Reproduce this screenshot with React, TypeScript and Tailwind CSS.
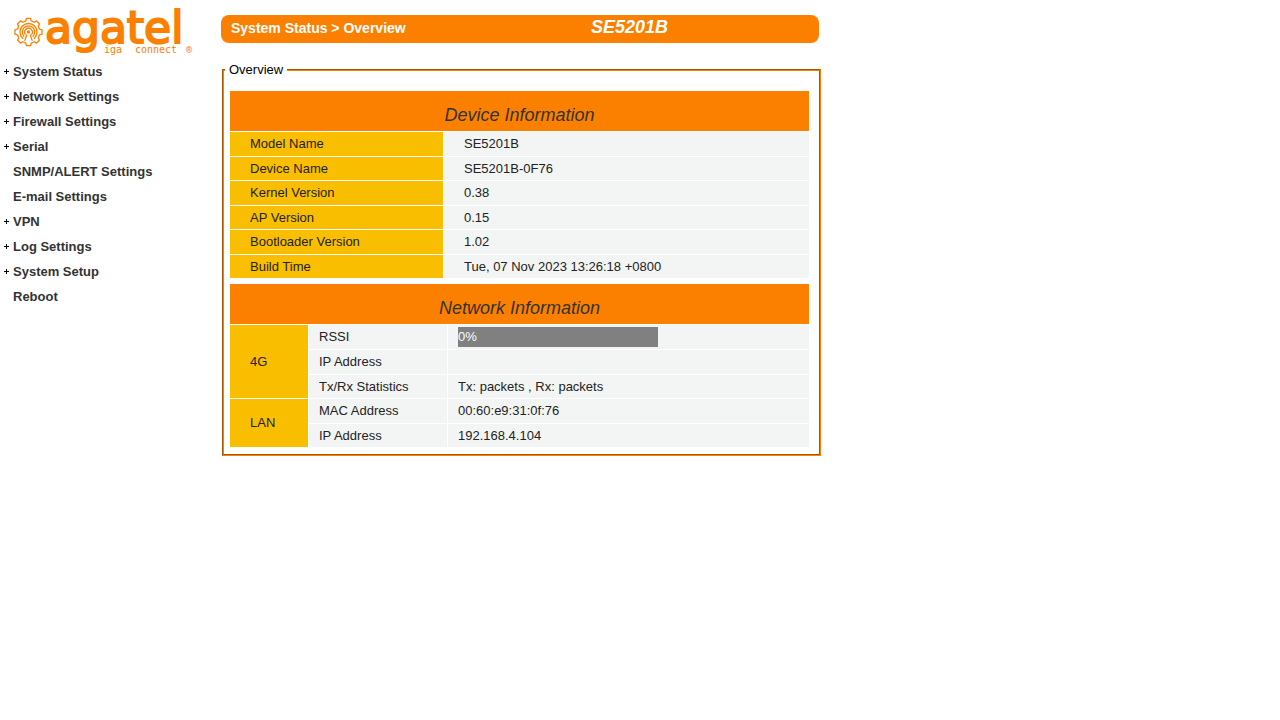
import type { ReactNode } from "react";

type NavItem = { label: string; expandable: boolean };

const navItems: NavItem[] = [
  { label: "System Status", expandable: true },
  { label: "Network Settings", expandable: true },
  { label: "Firewall Settings", expandable: true },
  { label: "Serial", expandable: true },
  { label: "SNMP/ALERT Settings", expandable: false },
  { label: "E-mail Settings", expandable: false },
  { label: "VPN", expandable: true },
  { label: "Log Settings", expandable: true },
  { label: "System Setup", expandable: true },
  { label: "Reboot", expandable: false },
];

const deviceRows: [string, string][] = [
  ["Model Name", "SE5201B"],
  ["Device Name", "SE5201B-0F76"],
  ["Kernel Version", "0.38"],
  ["AP Version", "0.15"],
  ["Bootloader Version", "1.02"],
  ["Build Time", "Tue, 07 Nov 2023 13:26:18 +0800"],
];

const networkGroups: { name: string; rows: [string, ReactNode][] }[] = [
  {
    name: "4G",
    rows: [
      ["RSSI", <SignalBar key="rssi" percent={0} />],
      ["IP Address", ""],
      ["Tx/Rx Statistics", "Tx: packets , Rx: packets"],
    ],
  },
  {
    name: "LAN",
    rows: [
      ["MAC Address", "00:60:e9:31:0f:76"],
      ["IP Address", "192.168.4.104"],
    ],
  },
];

function SignalBar({ percent }: { percent: number }) {
  return <div className="h-5 w-[200px] bg-[#808080] text-white">{percent}%</div>;
}

// Outline of an eight-toothed gear centred on the origin.
const gearPoints = Array.from({ length: 8 }, (_, i) => {
  const base = i * 45 - 90;
  return [
    [-14, 11.4],
    [-9, 13.7],
    [9, 13.7],
    [14, 11.4],
  ]
    .map(([offset, radius]) => {
      const angle = ((base + offset) * Math.PI) / 180;
      return `${(Math.cos(angle) * radius).toFixed(2)},${(Math.sin(angle) * radius).toFixed(2)}`;
    })
    .join(" ");
}).join(" ");

function Logo() {
  return (
    <svg width="200" height="59" viewBox="0 0 200 59" role="img" aria-label="agatel" fill="#fc8000">
      <g transform="translate(28.5 32)" fill="none" stroke="#fc8000" strokeWidth="1.3" strokeLinecap="round">
        <polygon points={gearPoints} strokeLinejoin="round" />
        <path d="M-5.8 6.2A8.5 8.5 0 1 1 5.8 6.2" />
        <path d="M-4.6 4.2A6.2 6.2 0 1 1 4.6 4.2" />
        <path d="M-3.2 2.3A3.9 3.9 0 1 1 3.2 2.3" />
        <path d="M-1.8 3L-3.6 8.4M1.8 3L3.6 8.4" />
        <circle r="1.7" fill="#fc8000" stroke="none" />
      </g>
      <text
        x="45"
        y="43"
        stroke="#fc8000"
        strokeWidth="2"
        className="font-['DejaVu_Sans',sans-serif] text-[44px]"
      >
        agatel
      </text>
      <g className="font-['DejaVu_Sans_Mono',monospace] text-[10px]">
        <text x="104" y="53">iga</text>
        <text x="135" y="53">connect</text>
        <text x="186" y="53">®</text>
      </g>
    </svg>
  );
}

function SectionHead({ span, children }: { span: number; children: ReactNode }) {
  return (
    <thead>
      <tr>
        <th
          colSpan={span}
          className="bg-[#fc8000] pt-[11px] pb-0.5 text-center text-lg/[27px] font-normal text-[#333333] italic"
        >
          {children}
        </th>
      </tr>
    </thead>
  );
}

function DeviceTable() {
  return (
    <table className="w-full table-fixed border-separate border-spacing-0">
      <colgroup>
        <col className="w-[213px]" />
        <col />
      </colgroup>
      <SectionHead span={2}>Device Information</SectionHead>
      <tbody>
        {deviceRows.map(([label, value]) => (
          <tr key={label}>
            <th scope="row" className="border-t border-white bg-[#fabe00] py-0.5 pl-5 text-left font-normal">
              {label}
            </th>
            <td className="border-t border-l border-white bg-[#f3f5f4] py-0.5 pl-5">{value}</td>
          </tr>
        ))}
      </tbody>
    </table>
  );
}

function NetworkTable() {
  return (
    <table className="w-full table-fixed border-separate border-spacing-0">
      <colgroup>
        <col className="w-[78px]" />
        <col className="w-[139px]" />
        <col />
      </colgroup>
      <SectionHead span={3}>Network Information</SectionHead>
      {networkGroups.map((group) => (
        <tbody key={group.name}>
          {group.rows.map(([label, value], index) => (
            <tr key={label}>
              {index === 0 && (
                <th
                  scope="rowgroup"
                  rowSpan={group.rows.length}
                  className="border-t border-white bg-[#fabe00] pl-5 text-left font-normal"
                >
                  {group.name}
                </th>
              )}
              <th
                scope="row"
                className="border-t border-l border-white bg-[#f3f5f4] py-0.5 pl-2.5 text-left font-normal"
              >
                {label}
              </th>
              <td className="border-t border-l border-white bg-[#f3f5f4] py-0.5 pl-2.5">{value}</td>
            </tr>
          ))}
        </tbody>
      ))}
    </table>
  );
}

export default function App() {
  return (
    <div className="flex min-h-screen bg-white font-['Liberation_Sans',Arial,sans-serif] text-[13px] leading-normal text-[#222222]">
      <aside className="w-[221px] shrink-0">
        <Logo />
        <nav>
          <ul>
            {navItems.map((item) => (
              <li key={item.label}>
                <a href="#" className="flex h-[25px] items-center gap-1 pl-1 font-bold text-[#333333]">
                  <svg width="5" height="5" viewBox="0 0 5 5" aria-hidden="true" shapeRendering="crispEdges">
                    {item.expandable && <path d="M2 0h1v2h2v1H3v2H2V3H0V2h2z" fill="#000000" />}
                  </svg>
                  {item.label}
                </a>
              </li>
            ))}
          </ul>
        </nav>
      </aside>

      <main className="w-full max-w-[600px] min-w-0 pt-[15px]">
        <header className="mr-0.5 flex h-7 items-center rounded-lg bg-[#fc8000] pl-2.5 font-bold text-white">
          <h1 className="w-[360px] pb-0.5 text-sm">System Status &gt; Overview</h1>
          <p className="pb-1 text-lg/6 italic">SE5201B</p>
        </header>

        <fieldset className="mt-[17px] ml-px border-2 border-[#fc8000] px-px pb-[7px] [border-style:groove]">
          <legend className="px-1 leading-5 text-black">Overview</legend>
          <div className="flex flex-col gap-1.5 pt-[11px] pr-[9px] pl-[5px]">
            <DeviceTable />
            <NetworkTable />
          </div>
        </fieldset>
      </main>
    </div>
  );
}
